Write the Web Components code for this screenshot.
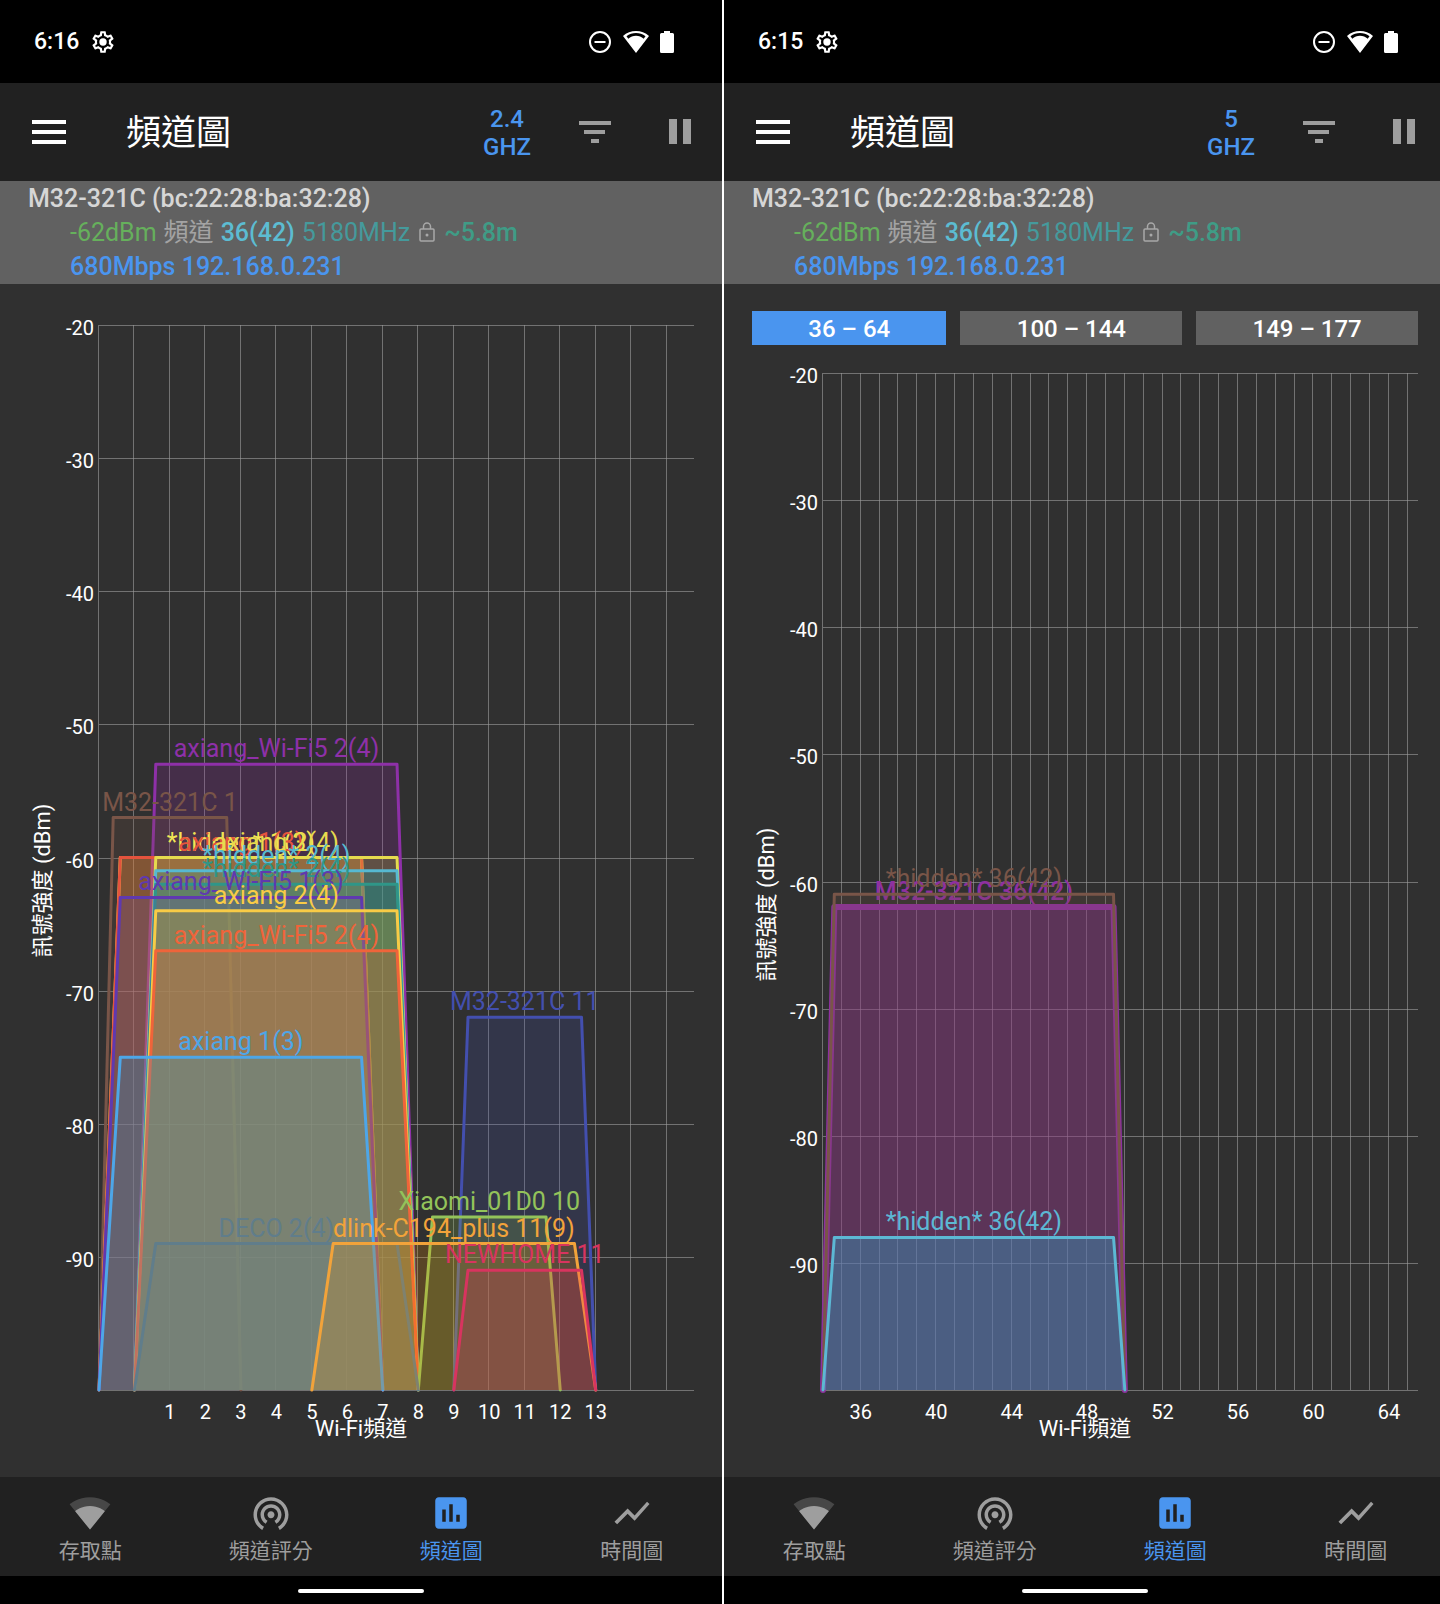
<!DOCTYPE html>
<html lang="zh-Hant">
<head>
<meta charset="utf-8">
<meta name="viewport" content="width=device-width, initial-scale=1">
<title>頻道圖</title>
<style>
  body {
    margin: 0;
    background: #fff;
    font-family: Roboto, "Noto Sans CJK TC", sans-serif;
  }

  .screens {
    display: grid;
    grid-template-columns: repeat(2, calc(50% + 2px));
    column-gap: 2px;
    min-height: 100vh;
    overflow: hidden;
  }
</style>
</head>
<body>
<div class="screens">
  <phone-screen>
    <status-bar slot="top" time="6:16"></status-bar>
    <app-toolbar slot="top" band="2.4">頻道圖</app-toolbar>
    <connection-info slot="top"></connection-info>
    <channel-chart band="2.4"></channel-chart>
    <bottom-nav slot="bottom"></bottom-nav>
  </phone-screen>
  <phone-screen>
    <status-bar slot="top" time="6:15"></status-bar>
    <app-toolbar slot="top" band="5">頻道圖</app-toolbar>
    <connection-info slot="top"></connection-info>
    <channel-range>
      <button type="button" aria-pressed="true">36 – 64</button>
      <button type="button" aria-pressed="false">100 – 144</button>
      <button type="button" aria-pressed="false">149 – 177</button>
    </channel-range>
    <channel-chart band="5"></channel-chart>
    <bottom-nav slot="bottom"></bottom-nav>
  </phone-screen>
</div>

<script>
class BaseElement extends HTMLElement {
  connectedCallback() {
    if (!this.shadowRoot) {
      this.attachShadow({ mode: 'open' });
    }
    this.shadowRoot.innerHTML = this.template();
  }
}

class PhoneScreen extends BaseElement {
  template() {
    return `
      <style>
        :host {
          display: flex;
          flex-direction: column;
          min-width: 0;
          background: #303030;
          color: #fff;
        }
        main {
          flex: 1;
          display: flex;
          flex-direction: column;
          gap: 14px;
          padding-top: 27px;
        }
        .home {
          display: flex;
          align-items: center;
          justify-content: center;
          height: 28px;
          padding-top: 2px;
          box-sizing: border-box;
          background: #000;
        }
        .home span {
          width: 126px;
          height: 4px;
          border-radius: 2px;
          background: #fff;
        }
      </style>
      <slot name="top"></slot>
      <main><slot></slot></main>
      <slot name="bottom"></slot>
      <div class="home"><span></span></div>
    `;
  }
}

class StatusBar extends BaseElement {
  template() {
    return `
      <style>
        :host {
          display: flex;
          align-items: center;
          height: 83px;
          padding: 0 48px 0 34px;
          box-sizing: border-box;
          background: #000;
          color: #fff;
          font-size: 23px;
          font-weight: 500;
        }
        .left, .right {
          display: flex;
          align-items: center;
          gap: 11px;
        }
        .right { margin-left: auto; }
        svg { display: block; fill: currentColor; }
      </style>
      <div class="left">
        <span>${this.getAttribute('time')}</span>
        <svg width="26" height="26" viewBox="0 0 24 24">
          <path d="M19.43 12.98c.04-.32.07-.64.07-.98s-.03-.66-.07-.98l2.11-1.65c.19-.15.24-.42.12-.64l-2-3.46c-.09-.16-.26-.25-.44-.25-.06 0-.12.01-.17.03l-2.49 1c-.52-.4-1.08-.73-1.69-.98l-.38-2.65C14.46 2.18 14.25 2 14 2h-4c-.25 0-.46.18-.49.42l-.38 2.65c-.61.25-1.17.59-1.69.98l-2.49-1c-.06-.02-.12-.03-.18-.03-.17 0-.34.09-.43.25l-2 3.46c-.13.22-.07.49.12.64l2.11 1.65c-.04.32-.07.65-.07.98s.03.66.07.98l-2.11 1.65c-.19.15-.24.42-.12.64l2 3.46c.09.16.26.25.44.25.06 0 .12-.01.17-.03l2.49-1c.52.4 1.08.73 1.69.98l.38 2.65c.03.24.24.42.49.42h4c.25 0 .46-.18.49-.42l.38-2.65c.61-.25 1.17-.59 1.69-.98l2.49 1c.06.02.12.03.18.03.17 0 .34-.09.43-.25l2-3.46c.12-.22.07-.49-.12-.64l-2.11-1.65zm-1.98-1.71c.04.31.05.52.05.73 0 .21-.02.43-.05.73l-.14 1.13.89.7 1.08.84-.7 1.21-1.27-.51-1.04-.42-.9.68c-.43.32-.84.56-1.25.73l-1.06.43-.16 1.13-.2 1.35h-1.4l-.19-1.35-.16-1.13-1.06-.43c-.43-.18-.83-.41-1.23-.71l-.91-.7-1.06.43-1.27.51-.7-1.21 1.08-.84.89-.7-.14-1.13c-.03-.31-.05-.54-.05-.74s.02-.43.05-.73l.14-1.13-.89-.7-1.08-.84.7-1.21 1.27.51 1.04.42.9-.68c.43-.32.84-.56 1.25-.73l1.06-.43.16-1.13.2-1.35h1.39l.19 1.35.16 1.13 1.06.43c.43.18.83.41 1.23.71l.91.7 1.06-.43 1.27-.51.7 1.21-1.07.85-.89.7.14 1.13z"/>
          <circle cx="12" cy="12" r="3.4"/>
        </svg>
      </div>
      <div class="right">
        <svg width="24" height="24" viewBox="0 0 24 24">
          <circle cx="12" cy="12" r="10" fill="none" stroke="currentColor" stroke-width="2"/>
          <path d="M6.500 11h11v2h-11z"/>
        </svg>
        <svg width="26" height="24" viewBox="0 0 26 24">
          <path fill-rule="evenodd" d="M13 23L0 6C7-.7 19-.7 26 6zM3.500 6.300L5.300 8.700C9.500 4.700 16.500 4.700 20.700 8.700L22.500 6.300C17 2 9 2 3.500 6.300z"/>
        </svg>
        <svg width="14" height="24" viewBox="0 0 14 24">
          <path d="M4 1h6v2h2.500q1.500 0 1.500 1.500v17q0 1.500-1.500 1.500h-11q-1.500 0-1.500-1.500v-17q0-1.500 1.500-1.500H4z"/>
        </svg>
      </div>
    `;
  }
}

class AppToolbar extends BaseElement {
  template() {
    return `
      <style>
        :host {
          display: flex;
          align-items: center;
          height: 98px;
          padding: 0 31px 0 32px;
          box-sizing: border-box;
          background: #212121;
        }
        button {
          padding: 0;
          border: 0;
          background: none;
          color: #9e9e9e;
          font: inherit;
          cursor: pointer;
        }
        svg { display: block; fill: currentColor; }
        .menu { color: #fff; }
        h1 {
          flex: 1;
          margin: 0 0 0 60px;
          padding-top: 4px;
          font-size: 35px;
          line-height: 48px;
          font-weight: 400;
        }
        .actions {
          display: flex;
          align-items: center;
        }
        .band {
          width: 64px;
          margin-right: 40px;
          padding-top: 2px;
          color: #4a95ef;
          font-size: 24px;
          font-weight: 500;
          line-height: 28px;
        }
        .filter { margin-right: 58px; }
      </style>
      <button class="menu" type="button" aria-label="Menu">
        <svg width="34" height="24"><path d="M0 0h34v4H0zM0 10h34v4H0zM0 20h34v4H0z"/></svg>
      </button>
      <h1><slot></slot></h1>
      <div class="actions">
        <button class="band" type="button">${this.getAttribute('band')}<br>GHZ</button>
        <button class="filter" type="button" aria-label="Filter">
          <svg width="32" height="22"><path d="M0 0h32v4H0zM5 9h21v4H5zM12 18h8v4h-8z"/></svg>
        </button>
        <button type="button" aria-label="Pause">
          <svg width="22" height="26"><path d="M0 0h8v25H0zM14 0h8v25h-8z"/></svg>
        </button>
      </div>
    `;
  }
}

class ConnectionInfo extends BaseElement {
  template() {
    return `
      <style>
        :host {
          display: block;
          height: 103px;
          padding: 1px 28px 0;
          box-sizing: border-box;
          background: #616161;
          font-size: 25px;
          line-height: 34px;
          white-space: nowrap;
        }
        .ssid { color: #d6d6d6; font-weight: 500; }
        .row {
          display: flex;
          align-items: center;
          gap: 7px;
          padding-left: 42px;
        }
        .level { color: #66b05c; }
        .label { color: #a3a3a3; }
        .channel { color: #5cbcd2; font-weight: 500; }
        .frequency { color: #459a9c; }
        .distance { color: #3f9c86; font-weight: 500; }
        .link { color: #4a95ef; font-weight: 500; }
        svg { display: block; margin: 0 2px; }
      </style>
      <div class="ssid">M32-321C (bc:22:28:ba:32:28)</div>
      <div class="row">
        <span class="level">-62dBm</span>
        <span class="label">頻道</span>
        <span class="channel">36(42)</span>
        <span class="frequency">5180MHz</span>
        <svg width="16" height="22" viewBox="0 0 16 22" fill="none" stroke="#a8a8a8" stroke-width="1.500">
          <rect x="1" y="7" width="14" height="12" rx="1"/>
          <path d="M4.500 7V4.500a3.500 3.500 0 0 1 7 0V7"/>
          <circle cx="8" cy="13" r="1.500" fill="#a8a8a8" stroke="none"/>
        </svg>
        <span class="distance">~5.8m</span>
      </div>
      <div class="row link">680Mbps 192.168.0.231</div>
    `;
  }
}

class ChannelRange extends BaseElement {
  template() {
    return `
      <style>
        :host {
          display: flex;
          gap: 14px;
          padding: 0 28px;
        }
        ::slotted(button) {
          flex: 1 1 auto;
          height: 34px;
          padding: 2px 0 0;
          border: 0;
          background: #616161;
          color: #fff;
          font: 500 24px/32px Roboto, sans-serif;
          cursor: pointer;
        }
        ::slotted(button[aria-pressed="true"]) { background: #4a95ef; }
      </style>
      <slot></slot>
    `;
  }
}

// Networks are listed in painting order, the strongest ones at the back.
const BANDS = {
  '2.4': {
    first: -1,
    lines: 17,
    labels: [1, 2, 3, 4, 5, 6, 7, 8, 9, 10, 11, 12, 13],
    span: 16.77,
    networks: [
      { name: 'axiang_Wi-Fi5 2(4)', center: 4, half: 4, level: -53, color: '#8e30a8', fill: '#9c27b0' },
      { name: 'M32-321C 1', center: 1, half: 2, level: -57, color: '#795548', fill: '#795548' },
      { name: '*hidden* 1(3)', center: 3, half: 4, level: -60, color: '#f2e555', fill: '#ffeb3b' },
      { name: 'axiang 1(3)', center: 3, half: 4, level: -60, color: '#e5533d', fill: '#f44336' },
      { name: 'axiang 2(4)', center: 4, half: 4, level: -60, color: '#e6db4e', fill: '#cddc39' },
      { name: '*hidden* 2(4)', center: 4, half: 4, level: -61, color: '#56b9d2', fill: '#00bcd4' },
      { name: '*hidden* 2(4)', center: 4, half: 4, level: -62, color: '#2f9688', fill: '#009688' },
      { name: 'axiang_Wi-Fi5 1(3)', center: 3, half: 4, level: -63, color: '#5f39b0', fill: '#673ab7' },
      { name: 'axiang 2(4)', center: 4, half: 4, level: -64, color: '#f8cb46', fill: '#ffc107' },
      { name: 'axiang_Wi-Fi5 2(4)', center: 4, half: 4, level: -67, color: '#f0643a', fill: '#ff5722' },
      { name: 'M32-321C 11', center: 11, half: 2, level: -72, color: '#434fae', fill: '#3f51b5' },
      { name: 'axiang 1(3)', center: 3, half: 4, level: -75, color: '#4da6e8', fill: '#03a9f4' },
      { name: 'Xiaomi_01D0 10', center: 10, half: 2, level: -87, color: '#93c35a', fill: '#8bc34a' },
      { name: 'DECO 2(4)', center: 4, half: 4, level: -89, color: '#607d8b', fill: '#607d8b' },
      { name: 'dlink-C194_plus 11(9)', center: 9, half: 4, level: -89, color: '#f2a33a', fill: '#ff9800' },
      { name: 'NEWHOME 11', center: 11, half: 2, level: -91, color: '#d8345f', fill: '#e91e63' }
    ]
  },
  '5': {
    first: 34,
    lines: 32,
    labels: [36, 40, 44, 48, 52, 56, 60, 64],
    span: 31.54,
    networks: [
      { name: 'M32-321C 36(42)', center: 42, half: 8, level: -62, color: '#8e30a0', fill: '#9c27b0', opacity: .36, connected: true },
      { name: '*hidden* 36(42)', center: 42, half: 8, level: -61, color: '#795548', fill: '#795548' },
      { name: '*hidden* 36(42)', center: 42, half: 8, level: -88, color: '#5cb8d4', fill: '#28b8dc', opacity: .32 }
    ]
  }
};

const TOP_LEVEL = -20;
const BOTTOM_LEVEL = -100;
const INSET = { top: 14, right: 28, bottom: 87, left: 99 };

class ChannelChart extends BaseElement {
  template() {
    return `
      <style>
        :host {
          display: block;
          flex: 1;
          min-height: 400px;
          overflow: hidden;
          contain: size;
        }
        svg { display: block; width: 100%; height: 100%; }
        text { fill: #fff; font-size: 20px; }
        .grid { stroke: #9e9e9e; stroke-opacity: .6; stroke-width: 1; }
        .title { font-size: 22px; text-anchor: middle; }
        .x { text-anchor: middle; }
        .y { text-anchor: end; }
        .name { font-size: 25px; text-anchor: middle; }
        .area { stroke-width: 3; }
        .connected.area { stroke-width: 6; }
        .connected.name { font-weight: 500; }
      </style>
      <svg role="img" aria-label="頻道圖"></svg>
    `;
  }

  connectedCallback() {
    super.connectedCallback();
    this.band = BANDS[this.getAttribute('band')];
    this.observer = new ResizeObserver(() => this.draw());
    this.observer.observe(this);
    this.draw();
  }

  disconnectedCallback() {
    this.observer.disconnect();
  }

  draw() {
    const width = this.clientWidth;
    const height = this.clientHeight;
    const plot = {
      left: INSET.left,
      right: width - INSET.right,
      top: INSET.top,
      bottom: height - INSET.bottom
    };
    const unit = (plot.right - plot.left) / this.band.span;
    const x = channel => plot.left + (channel - this.band.first) * unit;
    const y = level => plot.top +
      (TOP_LEVEL - level) / (TOP_LEVEL - BOTTOM_LEVEL) * (plot.bottom - plot.top);

    this.shadowRoot.querySelector('svg').innerHTML =
      this.grid(plot, x, y) +
      this.band.networks.map(network => this.network(network, x, y)).join('') +
      this.titles(plot, width);
  }

  grid(plot, x, y) {
    let out = '';
    for (let i = 0; i < this.band.lines; i++) {
      const lineX = Math.round(x(this.band.first + i)) - .5;
      out += `<line class="grid" x1="${lineX}" y1="${plot.top}" x2="${lineX}" y2="${plot.bottom}"/>`;
    }
    for (let level = TOP_LEVEL; level >= BOTTOM_LEVEL; level -= 10) {
      const lineY = Math.round(y(level)) + .5;
      out += `<line class="grid" x1="${plot.left}" y1="${lineY}" x2="${plot.right}" y2="${lineY}"/>`;
      if (level > BOTTOM_LEVEL) {
        out += `<text class="y" x="${plot.left - 5}" y="${Math.floor(lineY) + 10}">${level}</text>`;
      }
    }
    this.band.labels.forEach(channel => {
      out += `<text class="x" x="${x(channel)}" y="${plot.bottom + 29}">${channel}</text>`;
    });
    return out;
  }

  network(network, x, y) {
    const { name, center, half, level, color, fill, opacity = .2, connected } = network;
    const state = connected ? 'connected' : '';
    const shoulder = half === 2 ? 1.6 : half - .6;
    const points = [
      [center - half, BOTTOM_LEVEL],
      [center - shoulder, level],
      [center + shoulder, level],
      [center + half, BOTTOM_LEVEL]
    ].map(point => `${x(point[0])},${y(point[1])}`).join(' ');
    return `
      <polyline class="area ${state}" points="${points}" fill="${fill}" fill-opacity="${opacity}"
        stroke="${color}" stroke-linejoin="round" stroke-linecap="round"/>
      <text class="name ${state}" x="${x(center)}" y="${y(level) - 7}" style="fill:${color}">${name}</text>
    `;
  }

  titles(plot, width) {
    const middle = (plot.top + plot.bottom) / 2 + 23;
    return `
      <text class="title" x="${width / 2}" y="${plot.bottom + 46}">Wi-Fi頻道</text>
      <text class="title" transform="translate(50 ${middle}) rotate(-90)">訊號強度 (dBm)</text>
    `;
  }
}

class BottomNav extends BaseElement {
  template() {
    return `
      <style>
        :host {
          display: block;
          background: #212121;
        }
        nav {
          display: grid;
          grid-template-columns: repeat(4, 1fr);
          height: 99px;
        }
        a {
          display: flex;
          flex-direction: column;
          align-items: center;
          padding-top: 15px;
          color: #9e9e9e;
          font-size: 21px;
          line-height: 34px;
          text-decoration: none;
        }
        a[aria-current] { color: #4a95ef; }
        svg { width: 42px; height: 42px; fill: currentColor; }
      </style>
      <nav>
        <a href="#access-points">
          <svg viewBox="0 0 24 24">
            <path fill-opacity=".3" d="M12.010 21.490L23.640 7c-.45-.34-4.930-4-11.640-4C5.280 3 .81 6.660.36 7l11.630 14.490.01.01.01-.01z"/>
            <path d="M3.530 10.950l8.460 10.540.01.01.01-.01 8.460-10.540C20.040 10.620 16.810 8 12 8c-4.810 0-8.040 2.620-8.470 2.950z"/>
          </svg>
          <span>存取點</span>
        </a>
        <a href="#channel-rating">
          <svg viewBox="0 0 24 24">
            <path d="M12 11c-1.100 0-2 .9-2 2s.9 2 2 2 2-.9 2-2-.9-2-2-2zm6 2c0-3.310-2.690-6-6-6s-6 2.690-6 6c0 2.220 1.210 4.150 3 5.190l1-1.740c-1.190-.7-2-1.970-2-3.450 0-2.210 1.790-4 4-4s4 1.790 4 4c0 1.480-.81 2.750-2 3.450l1 1.740c1.790-1.040 3-2.970 3-5.190zM12 3C6.480 3 2 7.480 2 13c0 3.700 2.010 6.920 4.990 8.650l1-1.730C5.610 18.530 4 15.960 4 13c0-4.420 3.580-8 8-8s8 3.580 8 8c0 2.960-1.610 5.530-4 6.920l1 1.730c2.990-1.730 5-4.950 5-8.650 0-5.520-4.480-10-10-10z"/>
          </svg>
          <span>頻道評分</span>
        </a>
        <a href="#channel-graph" aria-current="page">
          <svg viewBox="0 0 24 24">
            <path d="M19 3H5c-1.100 0-2 .9-2 2v14c0 1.100.9 2 2 2h14c1.100 0 2-.9 2-2V5c0-1.100-.9-2-2-2zM9 17H7v-7h2v7zm4 0h-2V7h2v10zm4 0h-2v-4h2v4z"/>
          </svg>
          <span>頻道圖</span>
        </a>
        <a href="#time-graph">
          <svg viewBox="0 0 24 24">
            <path d="M3.500 18.490l6-6.010 4 4L22 6.920l-1.410-1.410-7.090 7.970-4-4L2 16.990z"/>
          </svg>
          <span>時間圖</span>
        </a>
      </nav>
    `;
  }
}

customElements.define('phone-screen', PhoneScreen);
customElements.define('status-bar', StatusBar);
customElements.define('app-toolbar', AppToolbar);
customElements.define('connection-info', ConnectionInfo);
customElements.define('channel-range', ChannelRange);
customElements.define('channel-chart', ChannelChart);
customElements.define('bottom-nav', BottomNav);
</script>
</body>
</html>
